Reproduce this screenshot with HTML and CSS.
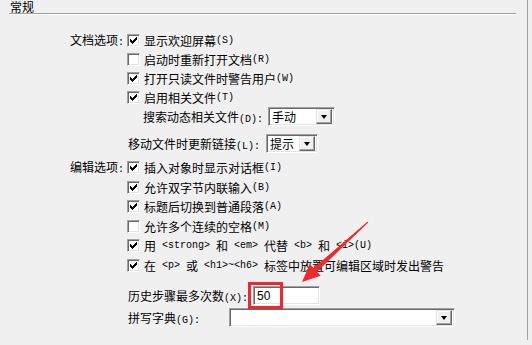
FILE: index.html
```html
<!DOCTYPE html>
<html lang="zh-CN">
<head>
    <meta charset="UTF-8">
    <title>常规</title>
    <link rel="stylesheet" href="styles.css">
</head>
<body>

<div class="panel">
    <div class="head">
        <span class="head-title">常规</span>
        <div class="rule"></div>
    </div>

    <div class="group doc">
        <div class="label">文档选项<span class="k">:</span></div>
        <div class="opts">
            <div class="row r20"><span class="cb on"></span>显示欢迎屏幕<span class="k">(S)</span></div>
            <div class="row r19"><span class="cb"></span>启动时重新打开文档<span class="k">(R)</span></div>
            <div class="row r19"><span class="cb on"></span>打开只读文件时警告用户<span class="k">(W)</span></div>
            <div class="row r19"><span class="cb on"></span>启用相关文件<span class="k">(T)</span></div>
            <div class="row r19 sub">
                <span>搜索动态相关文件<span class="k">(D):</span></span>
                <div class="combo combo-mode"><span class="val">手动</span><span class="btn"><i></i></span></div>
            </div>
        </div>
    </div>

    <div class="row r19 plain move">
        <span>移动文件时更新链接<span class="k">(L):</span></span>
        <div class="combo combo-link"><span class="val">提示</span><span class="btn"><i></i></span></div>
    </div>

    <div class="group edit">
        <div class="label">编辑选项<span class="k">:</span></div>
        <div class="opts">
            <div class="row r20"><span class="cb on"></span>插入对象时显示对话框<span class="k">(I)</span></div>
            <div class="row r20"><span class="cb on"></span>允许双字节内联输入<span class="k">(B)</span></div>
            <div class="row r19"><span class="cb on"></span>标题后切换到普通段落<span class="k">(A)</span></div>
            <div class="row r20"><span class="cb"></span>允许多个连续的空格<span class="k">(M)</span></div>
            <div class="row r19"><span class="cb on"></span>用<span class="k"> &lt;strong&gt; </span>和<span class="k"> &lt;em&gt; </span>代替<span class="k"> &lt;b&gt; </span>和<span class="k"> &lt;i&gt;(U)</span></div>
            <div class="row r20"><span class="cb on"></span>在<span class="k"> &lt;p&gt; </span>或<span class="k"> &lt;h1&gt;~&lt;h6&gt; </span>标签中放置可编辑区域时发出警告</div>
        </div>
    </div>

    <div class="row r19 plain hist">
        <span>历史步骤最多次数<span class="k">(X):</span></span>
        <div class="field">50</div>
    </div>

    <div class="row r19 plain dict">
        <span>拼写字典<span class="k">(G):</span></span>
        <div class="combo combo-dict"><span class="val"></span><span class="btn"><i></i></span></div>
    </div>

    <!-- annotation drawn over the dialog -->
    <div class="mark"></div>
    <svg class="arrow" width="532" height="345" viewBox="0 0 532 345">
        <polygon points="368.3,222.4 317,271.8 320.7,275.8 302,282 309.9,264 313.6,268 367.7,221.6" fill="#ea2a2f"/>
    </svg>
</div>

</body>
</html>
```

FILE: styles.css
```css
body {
    margin: 0;
    background: #f0f0f0;
    font-family: "Noto Sans CJK SC", "Liberation Sans", sans-serif;
    font-size: 12px;
    color: #000;
}
.panel {
    position: relative;
    width: 527px;
    height: 340px;
    border-right: 1px solid #a0a0a0;
    overflow: hidden;
}
.head {
    height: 30px;
}
.head-title {
    display: block;
    line-height: 14px;
    margin: 0 0 0 10px;
}
.rule {
    width: 507px;
    margin: -1px 0 0 9px;
    border-top: 1px solid #a0a0a0;
    border-bottom: 1px solid #fff;
}
.k {
    font-family: "Liberation Mono", monospace;
    font-size: 10px;
    white-space: pre;
}
.group {
    display: grid;
    grid-template-columns: 124px 1fr;
    column-gap: 3px;
}
.label {
    text-align: right;
    line-height: 20px;
    height: 20px;
}
.row {
    display: flex;
    align-items: center;
    white-space: nowrap;
}
.r20 { height: 20px; }
.r19 { height: 19px; }
.sub {
    padding-left: 16px;
}
.plain {
    padding-left: 128px;
}
.move {
    margin-top: 8px;
}
.edit {
    margin-top: 4px;
}
.hist {
    margin-top: 11px;
}
.dict {
    margin-top: 3px;
}
.cb {
    box-sizing: border-box;
    width: 13px;
    height: 13px;
    margin-right: 4px;
    background: #fff;
    border: 1px solid;
    border-color: #a0a0a0 #fff #fff #a0a0a0;
    box-shadow: inset 1px 1px #696969, inset -1px -1px #e3e3e3;
    flex: none;
    position: relative;
}
.cb.on::after {
    content: "";
    position: absolute;
    left: 2px;
    top: 2px;
    width: 7px;
    height: 7px;
    background: linear-gradient(#000, #000) 0 2px / 1px 3px no-repeat,
                linear-gradient(#000, #000) 1px 3px / 1px 3px no-repeat,
                linear-gradient(#000, #000) 2px 4px / 1px 3px no-repeat,
                linear-gradient(#000, #000) 3px 3px / 1px 3px no-repeat,
                linear-gradient(#000, #000) 4px 2px / 1px 3px no-repeat,
                linear-gradient(#000, #000) 5px 1px / 1px 3px no-repeat,
                linear-gradient(#000, #000) 6px 0 / 1px 3px no-repeat;
}
.combo, .field {
    box-sizing: border-box;
    height: 19px;
    background: #fff;
    border: 1px solid;
    border-color: #a0a0a0 #fff #fff #a0a0a0;
    box-shadow: inset 1px 1px #696969, inset -1px -1px #e3e3e3;
    display: flex;
    align-items: center;
    padding: 2px;
    flex: none;
}
.combo-mode {
    width: 67px;
    margin-left: 5px;
}
.combo-link {
    width: 52px;
    margin-left: 6px;
}
.combo-dict {
    width: 226px;
    margin-left: 29px;
}
.combo .val {
    flex: 1;
    padding-left: 1px;
    line-height: 15px;
}
.combo .btn {
    box-sizing: border-box;
    width: 16px;
    height: 15px;
    background: #f0f0f0;
    border: 1px solid;
    border-color: #e3e3e3 #696969 #696969 #e3e3e3;
    box-shadow: inset -1px -1px #a0a0a0, inset 1px 1px #fff;
    display: flex;
    align-items: center;
    justify-content: center;
}
.combo .btn i {
    width: 0;
    height: 0;
    border-left: 3.5px solid transparent;
    border-right: 3.5px solid transparent;
    border-top: 4px solid #000;
}
.field {
    width: 67px;
    margin-left: 5px;
    font-family: "Liberation Sans", sans-serif;
    font-size: 12px;
    padding-left: 3px;
}
.mark {
    position: absolute;
    left: 248px;
    top: 282px;
    width: 29px;
    height: 21px;
    border: 3px solid #ea2a2f;
}
.arrow {
    position: absolute;
    left: 0;
    top: 0;
}
```
